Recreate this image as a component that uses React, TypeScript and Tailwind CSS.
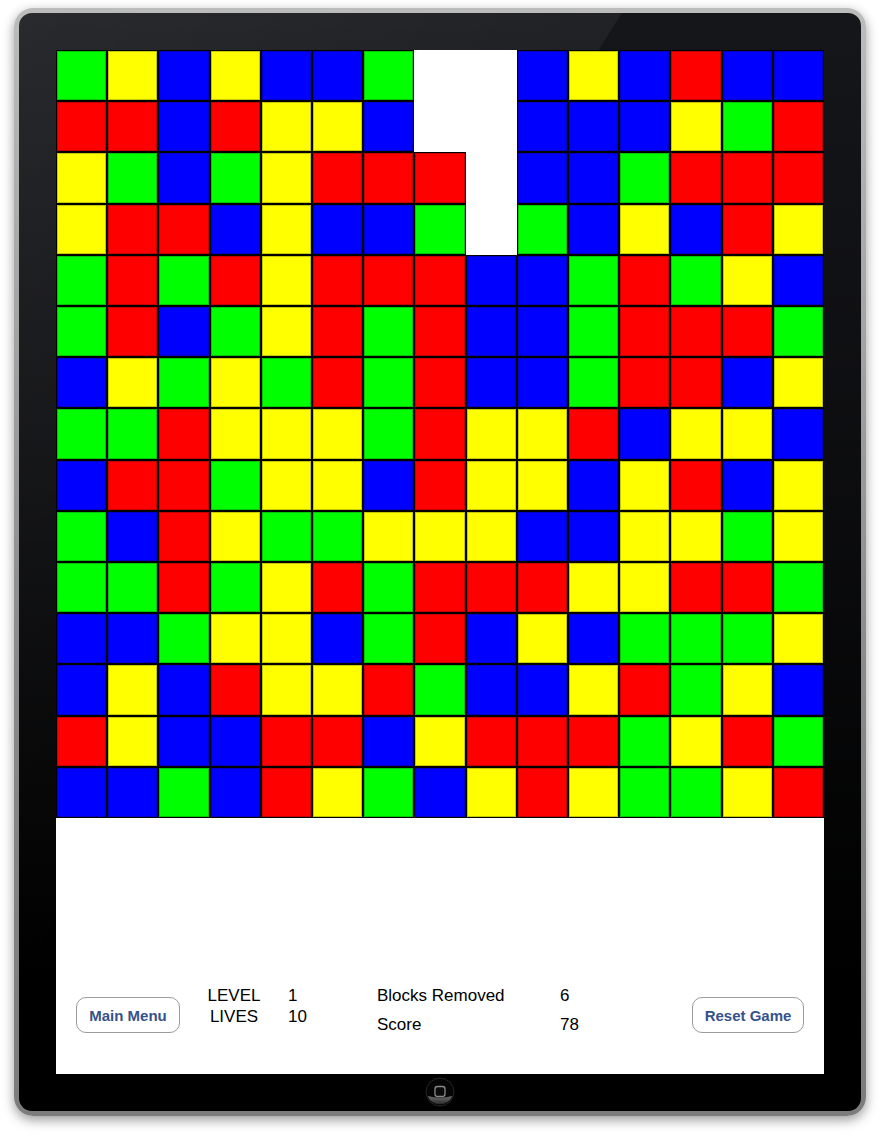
import React from 'react';

const board = [
  'GYBYBBG..BYBRBB',
  'RRBRYYB..BBBYGR',
  'YGBGYRRR.BBGRRR',
  'YRRBYBBG.GBYBRY',
  'GRGRYRRRBBGRGYB',
  'GRBGYRGRBBGRRRG',
  'BYGYGRGRBBGRRBY',
  'GGRYYYGRYYRBYYB',
  'BRRGYYBRYYBYRBY',
  'GBRYGGYYYBBYYGY',
  'GGRGYRGRRRYYRRG',
  'BBGYYBGRBYBGGGY',
  'BYBRYYRGBBYRGYB',
  'RYBBRRBYRRRGYRG',
  'BBGBRYGBYRYGGYR',
];

const cellColors: Record<string, string> = {
  G: 'bg-[#00ff00] border border-black shadow-[inset_0_0_0_1px_rgba(0,0,0,0.22)]',
  Y: 'bg-[#ffff00] border border-black shadow-[inset_0_0_0_1px_rgba(0,0,0,0.22)]',
  B: 'bg-[#0000ff] border border-black shadow-[inset_0_0_0_1px_rgba(0,0,0,0.22)]',
  R: 'bg-[#ff0000] border border-black shadow-[inset_0_0_0_1px_rgba(0,0,0,0.22)]',
  '.': 'bg-white',
};

function GameButton({ label, width }: { label: string; width: string }) {
  return (
    <button
      className={`${width} mt-3 h-9 rounded-[10px] border border-[#9c9c9c] bg-white text-[15px] font-bold text-[#36528a]`}
    >
      {label}
    </button>
  );
}

function HomeButton() {
  return (
    <svg width="30" height="30" viewBox="0 0 30 30" className="mt-[3px]">
      <defs>
        <linearGradient id="crescent" x1="0" y1="0" x2="0" y2="1">
          <stop offset="0" stopColor="#6e6e6e" />
          <stop offset="1" stopColor="#2c2c2c" />
        </linearGradient>
      </defs>
      <circle cx="15" cy="15" r="14" fill="#050505" stroke="#262626" strokeWidth="1" />
      <path d="M2.6 19 A13.5 13.5 0 0 0 27.4 19 Q15 22.5 2.6 19 Z" fill="url(#crescent)" />
      <rect x="10" y="9.5" width="10" height="10" rx="2.5" fill="#0a0a0a" stroke="#8a8a8a" strokeWidth="1.3" />
    </svg>
  );
}

export default function App() {
  return (
    <div className="h-[1136px] w-[880px] overflow-hidden bg-white pl-[14px] pt-2 font-['Liberation_Sans',Arial,sans-serif]">
      {/* device frame */}
      <div className="h-[1108px] w-[852px] rounded-[19px] bg-[linear-gradient(to_bottom,#bcbcbc,#8a8a8a_60%,#7c7c7c)] p-[5px] shadow-[0_4px_12px_rgba(0,0,0,0.4)]">
        <div className="flex h-[1098px] flex-col items-center rounded-[13px] bg-[#15161a] bg-[linear-gradient(to_bottom,transparent_0%,rgba(0,0,0,0.35)_36%,rgba(0,0,0,0.78)_70%,#000000_88%),linear-gradient(122deg,rgba(255,255,255,0.085)_0%,rgba(255,255,255,0.05)_39.4%,transparent_39.5%)] pt-[37px]">
          {/* screen */}
          <div className="w-[768px] bg-white">
            <div className="grid h-[768px] grid-cols-[repeat(15,1fr)] grid-rows-[repeat(15,1fr)]">
              {board.map((row, y) =>
                row.split('').map((c, x) => <div key={`${y}-${x}`} className={cellColors[c]} />)
              )}
            </div>
            <div className="flex h-[256px] items-start px-5 pt-[167px] text-[17px] leading-[21px] text-black">
              <GameButton label="Main Menu" width="w-[104px]" />
              <div className="ml-6 w-[60px] text-center">
                <div>LEVEL</div>
                <div>LIVES</div>
              </div>
              <div className="ml-6 w-[89px]">
                <div>1</div>
                <div>10</div>
              </div>
              <div className="flex w-[183px] flex-col gap-2">
                <div>Blocks Removed</div>
                <div>Score</div>
              </div>
              <div className="flex flex-col gap-2">
                <div>6</div>
                <div>78</div>
              </div>
              <div className="ml-auto">
                <GameButton label="Reset Game" width="w-[112px]" />
              </div>
            </div>
          </div>
          <HomeButton />
        </div>
      </div>
    </div>
  );
}
